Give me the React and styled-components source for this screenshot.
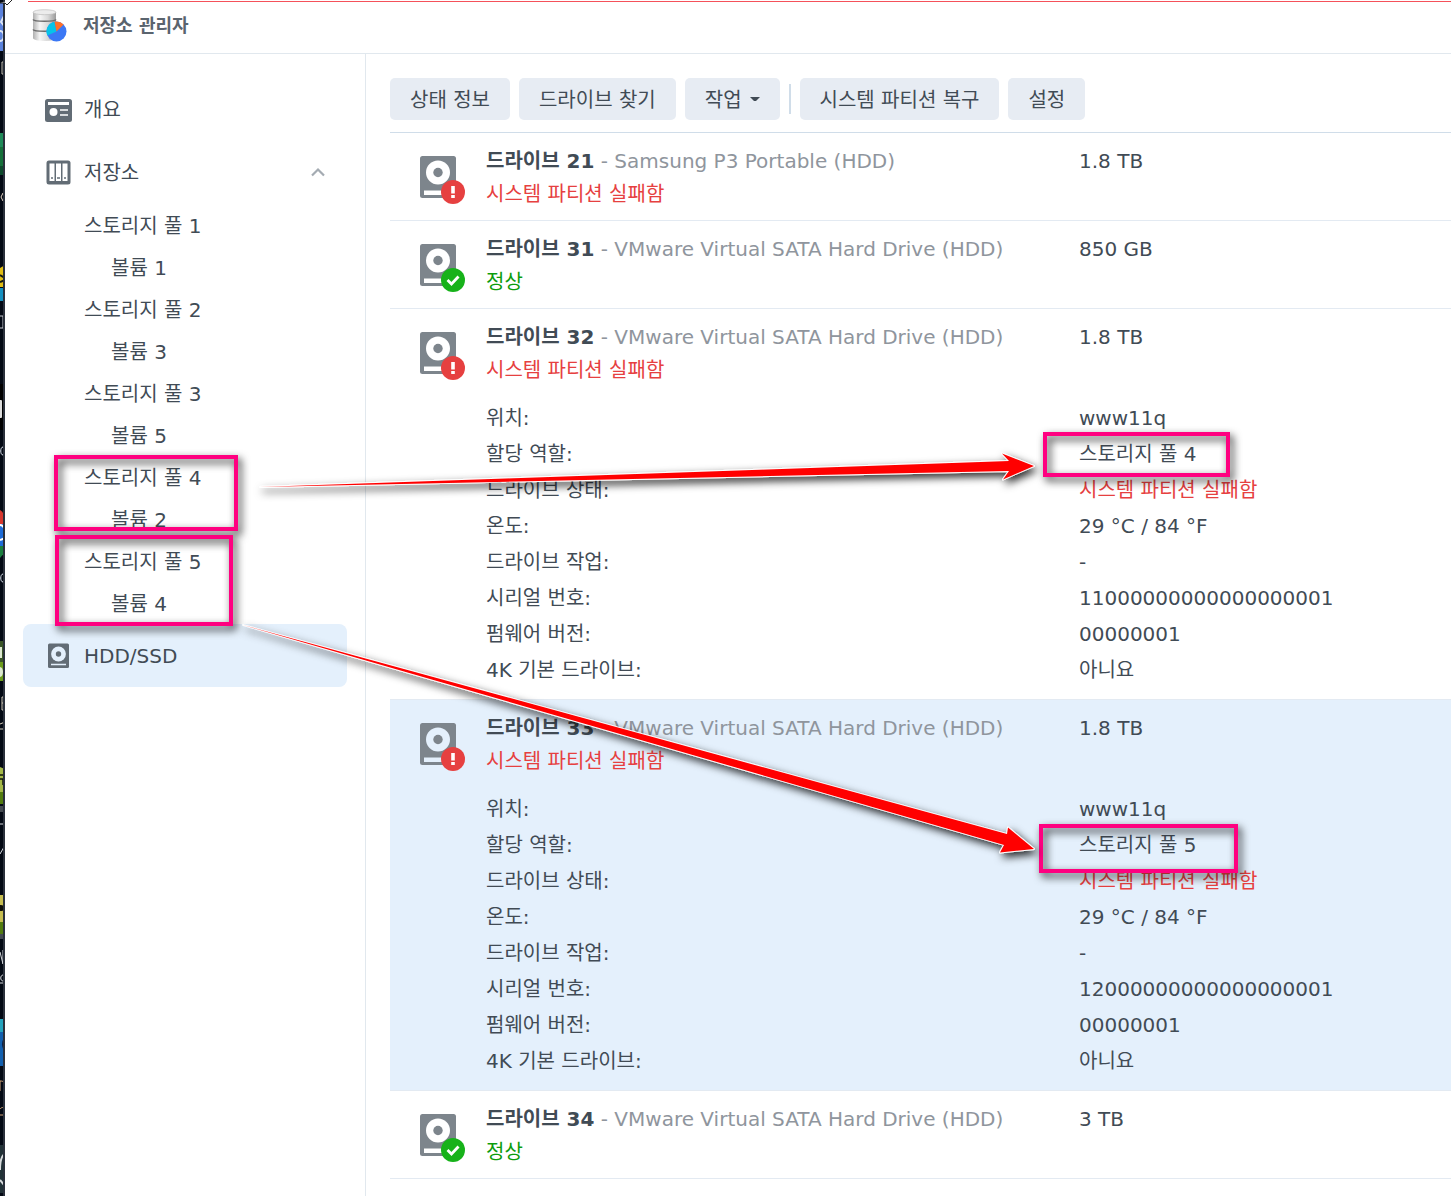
import React, { useState } from "react";
import styled, { createGlobalStyle } from "styled-components";

const GlobalStyle = createGlobalStyle`
  * {
    box-sizing: border-box;
  }
  body {
    margin: 0;
    background: #fff;
    color: #414b55;
    font-family: Verdana, "DejaVu Sans", "Noto Sans CJK KR", sans-serif;
    font-size: 20px;
    overflow-x: hidden;
  }
  ul, dl, dd, h1, h2, p {
    margin: 0;
    padding: 0;
  }
  ul {
    list-style: none;
  }
`;

const Page = styled.div`
  position: relative;
  display: flex;
  min-height: 100vh;
`;

const DesktopEdge = styled.div`
  flex: 0 0 5px;
  overflow: hidden;
  background: #030914;
  border-right: 2px solid #2a303b;

  svg {
    display: block;
  }
`;

const Window = styled.div`
  flex: 1;
  min-width: 0;
  display: flex;
  flex-direction: column;
`;

const TitleBar = styled.header`
  display: flex;
  align-items: center;
  gap: 15px;
  height: 54px;
  padding-left: 27px;
  border-bottom: 1px solid #e1e8ee;

  h1 {
    padding-bottom: 2px;
    color: #5a646e;
    font-size: 18px;
    line-height: 24px;
  }
`;

const TopLine = styled.div`
  position: absolute;
  top: 1px;
  left: 28px;
  right: 0;
  height: 1px;
  background: #f5515a;
`;

const Body = styled.div`
  flex: 1;
  display: flex;
`;

const Sidebar = styled.nav`
  flex: 0 0 361px;
  padding: 24px 18px;
  border-right: 1px solid #e1e8ee;
`;

const NavItem = styled.a`
  display: flex;
  align-items: center;
  gap: 10px;
  height: 63px;
  padding: 0 20px;
  border-radius: 8px;
  background: ${({ $active }) => ($active ? "#e4f0fc" : "transparent")};
  color: inherit;
  line-height: 24px;
  text-decoration: none;
`;

const NavLabel = styled.span`
  flex: 1;
`;

const SubItem = styled.a`
  display: block;
  height: 42px;
  padding-left: ${({ $level }) => ($level === 2 ? 88 : 61)}px;
  color: inherit;
  line-height: 45px;
  text-decoration: none;
`;

const Main = styled.main`
  flex: 1;
  min-width: 0;
  padding: 24px 0 0 24px;
`;

const Toolbar = styled.div`
  display: flex;
  align-items: center;
  gap: 9px;
  padding-bottom: 12px;
  border-bottom: 1px solid #d0dde9;
`;

const Button = styled.button`
  display: flex;
  align-items: center;
  gap: 8px;
  height: 42px;
  padding: 0 20px 2px;
  border: 0;
  border-radius: 5px;
  background: #e7ecf3;
  color: inherit;
  font: inherit;
  white-space: nowrap;
`;

const Separator = styled.span`
  width: 2px;
  height: 30px;
  background: #d0dde9;
`;

const DriveRow = styled.li`
  display: grid;
  grid-template-columns: 66px minmax(0, 593fr) minmax(0, 372fr);
  padding: 12px 0 ${({ $open }) => ($open ? 11 : 9)}px 30px;
  border-bottom: 1px solid #e3eaf2;
  background: ${({ $selected }) => ($selected ? "#e4f0fc" : "#fff")};
  line-height: 33px;

  > svg {
    margin-top: 11px;
  }
`;

const DriveName = styled.h2`
  color: #8f959d;
  font-size: 20px;
  font-weight: 400;
  white-space: nowrap;

  strong {
    color: #414b55;
  }
`;

const Status = styled.span`
  display: block;
  color: ${({ $ok }) => ($ok ? "#0c9c0c" : "#e64040")};
`;

const Details = styled.dl`
  grid-column: 2 / 4;
  display: grid;
  grid-template-columns: minmax(0, 593fr) minmax(0, 372fr);
  margin-top: 13px;
  line-height: 36px;

  span {
    line-height: 36px;
  }
`;

const Annotations = styled.svg`
  position: absolute;
  top: 0;
  left: 0;
  pointer-events: none;
`;

const ManagerIcon = () => (
  <svg width="36" height="36" viewBox="0 0 36 36" aria-hidden="true">
    <defs>
      <linearGradient id="metal">
        <stop offset="0" stopColor="#b0b0b0" />
        <stop offset="0.3" stopColor="#f6f6f6" />
        <stop offset="0.65" stopColor="#d8d8d8" />
        <stop offset="1" stopColor="#9a9a9a" />
      </linearGradient>
    </defs>
    <path d="M1 3v26c0 4 23 4 23 0V3z" fill="url(#metal)" />
    <ellipse cx="12.5" cy="3.2" rx="11.5" ry="2.5" fill="#ececec" stroke="#bdbdbd" strokeWidth="0.7" />
    <path d="M1 10.5c1 2.4 22 2.4 23 0M1 20.5c1 2.4 22 2.4 23 0" fill="none" stroke="#6d6d6d" strokeWidth="1.5" />
    <circle cx="24.5" cy="22.5" r="10" fill="#3b78f5" />
    <path d="M24.5 22.5L15.3 26.5A10 10 0 0 1 22.5 12.7z" fill="#06c4e8" />
    <path d="M24.5 22.5L22.5 12.7A10 10 0 0 1 31.6 15.5z" fill="#ff7029" />
  </svg>
);

const OverviewIcon = () => (
  <svg width="31" height="28" viewBox="0 0 31 28" aria-hidden="true">
    <rect x="2" y="3" width="27" height="23" rx="2.5" fill="#626c75" />
    <path d="M5 6h21v3H5z" fill="#fff" />
    <circle cx="10.5" cy="16" r="4" fill="#fff" />
    <path d="M17 14h8M17 19h8" stroke="#fff" strokeWidth="1.6" />
  </svg>
);

const StorageIcon = () => (
  <svg width="31" height="28" viewBox="0 0 31 28" aria-hidden="true">
    <rect x="3.5" y="1.5" width="24" height="24" rx="2.5" fill="#626c75" />
    <path d="M6.5 4.5h5v17.5h-5zM13 4.5h5v17.5h-5zM19.5 4.5h5v17.5h-5z" fill="#fff" />
    <path d="M8 19h2M14 19h3M21 19h2" stroke="#626c75" strokeWidth="1.4" />
  </svg>
);

const DiskIcon = () => (
  <svg width="31" height="28" viewBox="0 0 31 28" aria-hidden="true">
    <rect x="5" y="1.5" width="21" height="24.5" rx="1.5" fill="#626c75" />
    <circle cx="15.5" cy="12" r="7.4" fill="#e4f0fc" />
    <circle cx="15.5" cy="12" r="2.7" fill="#626c75" />
    <path d="M8 22.5h15" stroke="#e4f0fc" strokeWidth="1.5" />
  </svg>
);

const ChevronIcon = () => (
  <svg width="18" height="16" viewBox="0 0 18 16" aria-hidden="true">
    <path d="M3 10.5l6-6 6 6" fill="none" stroke="#a4abb2" strokeWidth="2.2" />
  </svg>
);

const DriveIcon = ({ ok, inner }) => (
  <svg width="46" height="49" viewBox="0 0 46 49" aria-hidden="true">
    <rect width="36" height="42" rx="2.5" fill="#7d858c" />
    <circle cx="18" cy="16.5" r="12" fill={inner} />
    <circle cx="18" cy="16.5" r="4.7" fill="#7d858c" />
    <path d="M4 34.5h20v4.5H4z" fill={inner} />
    <circle cx="33" cy="36" r="12" fill={ok ? "#17b21a" : "#e64040"} />
    {ok ? (
      <path d="M27.5 36l4 4 7-7.5" fill="none" stroke="#fff" strokeWidth="2.8" />
    ) : (
      <path d="M31.2 30h3.6v7.5h-3.6zM31.2 39h3.6v3h-3.6z" fill="#fff" />
    )}
  </svg>
);

const volumes = [
  ["스토리지 풀 1", "볼륨 1"],
  ["스토리지 풀 2", "볼륨 3"],
  ["스토리지 풀 3", "볼륨 5"],
  ["스토리지 풀 4", "볼륨 2"],
  ["스토리지 풀 5", "볼륨 4"],
];

const drives = [
  { id: 21, model: "Samsung P3 Portable (HDD)", size: "1.8 TB" },
  { id: 31, model: "VMware Virtual SATA Hard Drive (HDD)", size: "850 GB", ok: true },
  {
    id: 32,
    model: "VMware Virtual SATA Hard Drive (HDD)",
    size: "1.8 TB",
    pool: "스토리지 풀 4",
    serial: "11000000000000000001",
  },
  {
    id: 33,
    model: "VMware Virtual SATA Hard Drive (HDD)",
    size: "1.8 TB",
    pool: "스토리지 풀 5",
    serial: "12000000000000000001",
  },
  { id: 34, model: "VMware Virtual SATA Hard Drive (HDD)", size: "3 TB", ok: true },
];

const Drive = ({ drive, selected, onSelect }) => (
  <DriveRow $open={!!drive.pool} $selected={selected} onClick={onSelect}>
    <DriveIcon ok={drive.ok} inner={selected ? "#e4f0fc" : "#fff"} />
    <div>
      <DriveName>
        <strong>드라이브 {drive.id}</strong> - {drive.model}
      </DriveName>
      <Status $ok={drive.ok}>{drive.ok ? "정상" : "시스템 파티션 실패함"}</Status>
    </div>
    <p>{drive.size}</p>
    {drive.pool && (
      <Details>
        <dt>위치:</dt>
        <dd>www11q</dd>
        <dt>할당 역할:</dt>
        <dd>{drive.pool}</dd>
        <dt>드라이브 상태:</dt>
        <dd>
          <Status>시스템 파티션 실패함</Status>
        </dd>
        <dt>온도:</dt>
        <dd>29 °C / 84 °F</dd>
        <dt>드라이브 작업:</dt>
        <dd>-</dd>
        <dt>시리얼 번호:</dt>
        <dd>{drive.serial}</dd>
        <dt>펌웨어 버전:</dt>
        <dd>00000001</dd>
        <dt>4K 기본 드라이브:</dt>
        <dd>아니요</dd>
      </Details>
    )}
  </DriveRow>
);

// sliver of the desktop icons behind the window
const DesktopIcons = () => (
  <svg width="5" height="1196" viewBox="0 0 5 1196" aria-hidden="true">
    <path d="M0 3h5v48H0z" fill="#5b82dc" />
    <path d="M5 14l-4 8 4 5M0 31c5 0 5 10 0 10" fill="none" stroke="#dfe6f2" strokeWidth="2" />
    <path d="M2 62h3M2 62v12h3" fill="none" stroke="#c9c5b6" />
    <path d="M0 133h5v33H0z" fill="#1f8a58" />
    <path d="M0 147h5v19H0z" fill="#15703a" />
    <path d="M0 166h5v9H0z" fill="#0d4a2c" />
    <path d="M3 193l-2 4 2 4" fill="none" stroke="#e8d6c4" />
    <path d="M0 268l5-3v22H0z" fill="#e0bd14" />
    <path d="M0 275l5 3M0 282l5-2" stroke="#151a12" strokeWidth="2" />
    <path d="M0 288h5v13H0z" fill="#1490c0" />
    <path d="M0 316h3v12H0" fill="none" stroke="#c8ccd2" />
    <path d="M0 384h5v46H0z" fill="#000" />
    <rect x="-2" y="400" width="4" height="18" rx="1" fill="#dcdcdc" />
    <path d="M3 447c-3 0-3 8 0 8" fill="none" stroke="#dce4ee" />
    <path d="M0 510c3 2 5 5 5 9v6H0z" fill="#d6372e" />
    <path d="M0 524h5v22H0z" fill="#1e6cd8" />
    <path d="M0 525c2 0 4 2 5 5M0 540l5-2" stroke="#fff" strokeWidth="2" fill="none" />
    <path d="M0 546h5v6l-5 6z" fill="#1a7e3e" />
    <path d="M3 574c-3 0-3 8 0 8" fill="none" stroke="#dce4ee" />
    <path d="M0 641h5v21H0z" fill="#3a5527" />
    <path d="M0 662h5v19H0z" fill="#6c9c1c" />
    <path d="M0 647h2v11H0zM0 667c4 0 4 10 0 10" fill="#dce8d0" />
    <path d="M5 697H2v13h3M2 703h3M0 724l5-2M0 729h5" fill="none" stroke="#d6cfbd" />
    <path d="M0 767l5 2v26H0z" fill="#a4b848" />
    <path d="M0 775h5M0 779h3v6" fill="none" stroke="#0f1708" strokeWidth="1.5" />
    <path d="M0 792h5v12H0z" fill="#527c0f" />
    <path d="M0 806h5v6H0z" fill="#444a50" />
    <path d="M0 824h3M0 854l4-7v9" fill="none" stroke="#d9dce0" />
    <path d="M0 895h5v27H0z" fill="#c6bd51" />
    <circle cx="1" cy="908" r="3" fill="#101008" />
    <path d="M0 922h5v12H0z" fill="#527c0f" />
    <path d="M0 934h5v5H0z" fill="#444a50" />
    <path d="M0 952l3 12v-14M3 975c-3 0-3 6 0 6M0 983h5" fill="none" stroke="#d9dce0" />
    <path d="M0 1019h5v13H0z" fill="#24a3bd" />
    <path d="M0 1032h5v34H0z" fill="#125fae" />
    <path d="M5 1037c-4 4-4 10 0 15z" fill="#0a2048" />
    <path d="M0 1091V1081c2 0 3 0 4 2M0 1109c2-2 3-2 4 0v6H0" fill="none" stroke="#d5a77a" />
    <path d="M0 1145h5v48H0z" fill="#213237" />
    <path d="M5 1154c-5 2-5 12-5 16M0 1180l5 6" fill="none" stroke="#d7dadc" strokeWidth="2" />
  </svg>
);

const frames = [
  [56, 457, 180, 72],
  [57, 537, 174, 87],
  [1045, 434, 183, 41],
  [1041, 826, 195, 45],
];

const Marks = () => (
  <Annotations width="1451" height="1196" viewBox="0 0 1451 1196" aria-hidden="true">
    <defs>
      <filter id="shadow" filterUnits="userSpaceOnUse" x="0" y="0" width="1451" height="1196">
        <feDropShadow dx="3" dy="4" stdDeviation="4" floodColor="#000" floodOpacity="0.85" />
      </filter>
    </defs>
    <path d="M0 3h5l2 2 5-5" fill="#fff" stroke="#222" />
    {frames.map(([x, y, width, height]) => (
      <g key={`${x}-${y}`} filter="url(#shadow)">
        <rect x={x} y={y} width={width} height={height} fill="none" stroke="#ff0080" strokeWidth="4" />
      </g>
    ))}
    <g fill="#f00" stroke="#fff" strokeWidth="1.8" paintOrder="stroke" strokeLinejoin="round">
      <path d="M260 487L1009 461L1002 453.5L1034 466L1003 479.5L1009 471Z" filter="url(#shadow)" />
      <path d="M243 625L1007 834L1008 827.5L1034 849L1000 852.5L1004 845Z" filter="url(#shadow)" />
    </g>
  </Annotations>
);

const App = () => {
  const [selected, setSelected] = useState(33);

  return (
    <Page>
      <GlobalStyle />
      <DesktopEdge>
        <DesktopIcons />
      </DesktopEdge>
      <Window>
        <TopLine />
        <TitleBar>
          <ManagerIcon />
          <h1>저장소 관리자</h1>
        </TitleBar>
        <Body>
          <Sidebar>
            <NavItem href="#overview">
              <OverviewIcon />
              <NavLabel>개요</NavLabel>
            </NavItem>
            <NavItem href="#storage">
              <StorageIcon />
              <NavLabel>저장소</NavLabel>
              <ChevronIcon />
            </NavItem>
            <ul>
              {volumes.map(([pool, volume]) => (
                <li key={pool}>
                  <SubItem href="#pool">{pool}</SubItem>
                  <SubItem href="#volume" $level={2}>
                    {volume}
                  </SubItem>
                </li>
              ))}
            </ul>
            <NavItem href="#hdd" $active>
              <DiskIcon />
              <NavLabel>HDD/SSD</NavLabel>
            </NavItem>
          </Sidebar>
          <Main>
            <Toolbar>
              <Button>상태 정보</Button>
              <Button>드라이브 찾기</Button>
              <Button>
                작업
                <svg width="10" height="6" viewBox="0 0 10 6" aria-hidden="true">
                  <path d="M0 2h10L6 6H4z" fill="#414b55" />
                </svg>
              </Button>
              <Separator />
              <Button>시스템 파티션 복구</Button>
              <Button>설정</Button>
            </Toolbar>
            <ul>
              {drives.map((drive) => (
                <Drive
                  key={drive.id}
                  drive={drive}
                  selected={drive.id === selected}
                  onSelect={() => setSelected(drive.id)}
                />
              ))}
            </ul>
          </Main>
        </Body>
      </Window>
      <Marks />
    </Page>
  );
};

export default App;
